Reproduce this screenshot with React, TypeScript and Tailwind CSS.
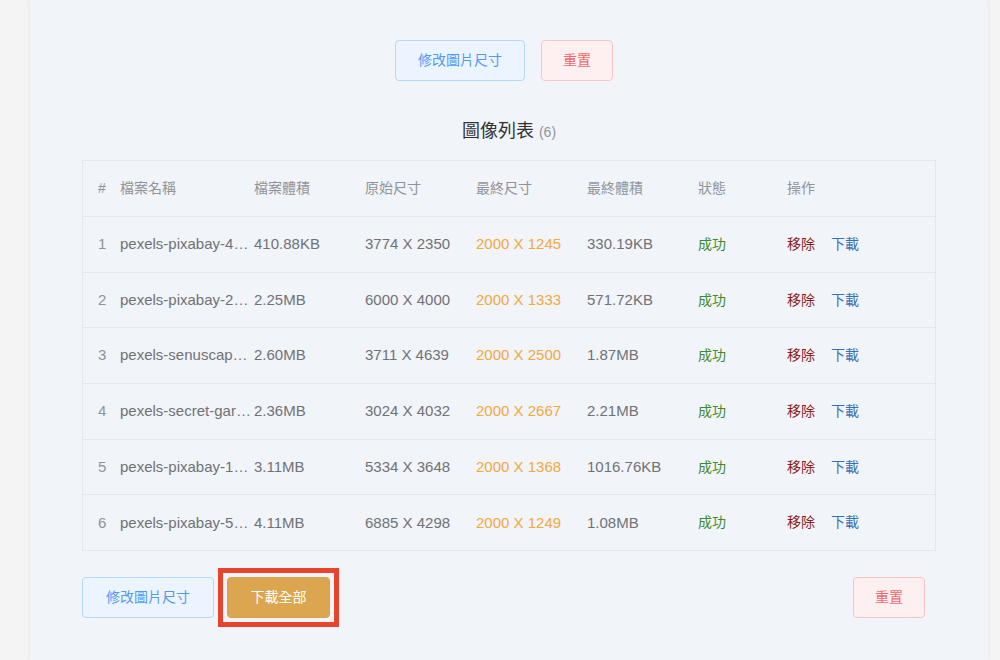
import React from "react";

const rows = [
  { n: 1, name: "pexels-pixabay-45201.jpg", size: "410.88KB", orig: "3774 X 2350", fin: "2000 X 1245", fsize: "330.19KB" },
  { n: 2, name: "pexels-pixabay-206359.jpg", size: "2.25MB", orig: "6000 X 4000", fin: "2000 X 1333", fsize: "571.72KB" },
  { n: 3, name: "pexels-senuscape-1658967.jpg", size: "2.60MB", orig: "3711 X 4639", fin: "2000 X 2500", fsize: "1.87MB" },
  { n: 4, name: "pexels-secret-garden-931177.jpg", size: "2.36MB", orig: "3024 X 4032", fin: "2000 X 2667", fsize: "2.21MB" },
  { n: 5, name: "pexels-pixabay-1324803.jpg", size: "3.11MB", orig: "5334 X 3648", fin: "2000 X 1368", fsize: "1016.76KB" },
  { n: 6, name: "pexels-pixabay-53141.jpg", size: "4.11MB", orig: "6885 X 4298", fin: "2000 X 1249", fsize: "1.08MB" },
];

const grid = "grid grid-cols-[22px_134px_111px_111px_111px_111px_89px_1fr] items-center pl-[15px]";

export default function App() {
  return (
    <div
      className="w-[1000px] h-[660px] bg-[#f4f4f4] overflow-hidden flex"
      style={{ fontFamily: '"Liberation Sans", "Noto Sans CJK TC", sans-serif' }}
    >
      <div className="ml-[30px] w-[958px] h-full bg-[#f1f4f9] shadow-[0_0_4px_rgba(0,0,0,0.08)] flex flex-col">
        <div className="flex justify-center gap-4 pt-[40px] pr-[10px]">
          <button className="h-[41px] w-[130px] rounded-[4px] border border-[#b3d8ff] bg-[#ecf5ff] text-[#4f9af5] text-[14px]">
            修改圖片尺寸
          </button>
          <button className="h-[41px] w-[72px] rounded-[4px] border border-[#fbc4c4] bg-[#fef0f0] text-[#f06a6a] text-[14px]">
            重置
          </button>
        </div>
        <div className="mt-[38px] text-center text-[18px] text-[#303133] leading-[24px]">
          圖像列表 <span className="text-[14px] text-[#909399]">(6)</span>
        </div>
        <div className="mt-[16px] ml-[52px] w-[854px] border border-[#e4e7ed] text-[14px]">
          <div className={`${grid} h-[55px] text-[#909399]`}>
            <div>#</div>
            <div>檔案名稱</div>
            <div>檔案體積</div>
            <div>原始尺寸</div>
            <div>最終尺寸</div>
            <div>最終體積</div>
            <div>狀態</div>
            <div>操作</div>
          </div>
          {rows.map((r) => (
            <div key={r.n} className={`${grid} h-[55.7px] border-t border-[#e4e7ed] text-[#707275] text-[15px]`}>
              <div className="text-[#909399]">{r.n}</div>
              <div className="truncate">{r.name}</div>
              <div>{r.size}</div>
              <div>{r.orig}</div>
              <div className="text-[#f5a83c]">{r.fin}</div>
              <div>{r.fsize}</div>
              <div className="text-[#3d8a2c] text-[14px]">成功</div>
              <div className="flex gap-[16px] text-[14px]">
                <span className="text-[#8b1c1c]">移除</span>
                <span className="text-[#3a70b4]">下載</span>
              </div>
            </div>
          ))}
        </div>
        <div className="mt-[26px] ml-[52px] w-[843px] flex items-center">
          <button className="h-[41px] w-[132px] rounded-[4px] border border-[#b3d8ff] bg-[#ecf5ff] text-[#4f9af5] text-[14px]">
            修改圖片尺寸
          </button>
          <div className="relative ml-[13px]">
            <button className="h-[41px] w-[103px] rounded-[4px] border border-[#d9a34d] bg-[#dca54f] text-white text-[14px]">
              下載全部
            </button>
            <div className="absolute left-[-9px] top-[-9px] w-[121px] h-[59px] border-[5px] border-[#e8432d] pointer-events-none" />
          </div>
          <div className="flex-1" />
          <button className="h-[41px] w-[72px] rounded-[4px] border border-[#fbc4c4] bg-[#fef0f0] text-[#f06a6a] text-[14px]">
            重置
          </button>
        </div>
      </div>
    </div>
  );
}
